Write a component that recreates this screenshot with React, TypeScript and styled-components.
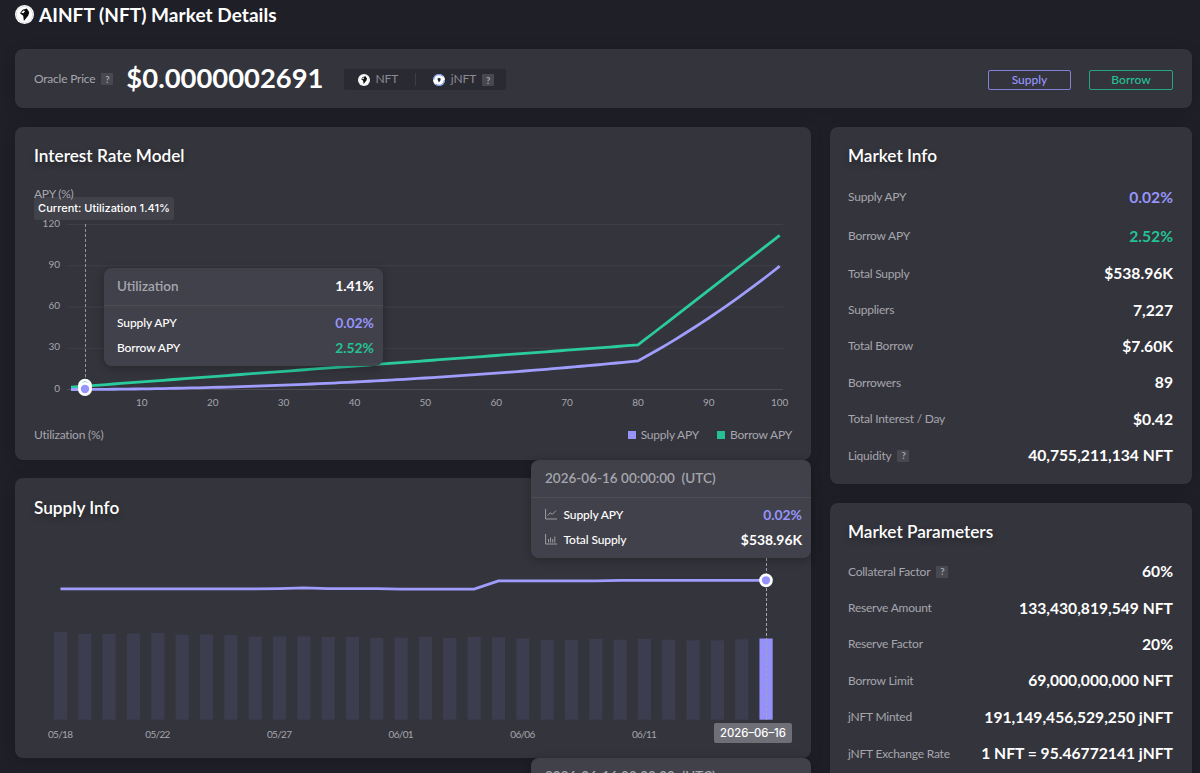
import React from 'react';
import styled, { createGlobalStyle } from 'styled-components';

const violet = '#9694fb';
const green = '#24c195';

const GlobalStyle = createGlobalStyle`
  * { box-sizing: border-box; }
  html, body { margin: 0; background: #1f1f28; overflow: hidden; }
  body { font-family: Lato, "Noto Sans", sans-serif; color: #fff; }
`;

const Page = styled.main`
  height: 773px;
  overflow: hidden;
  padding: 0 8px 0 15px;
`;

const PageTitle = styled.h1`
  display: flex;
  align-items: center;
  gap: 5px;
  height: 49px;
  padding-bottom: 20px;
  margin: 0;
  font-size: 19px;
  font-weight: 700;
  letter-spacing: 0.05px;
  white-space: nowrap;
`;

const Card = styled.section<{ $height?: number; $top?: number; $left?: number }>`
  position: relative;
  height: ${(p) => (p.$height ? `${p.$height}px` : 'auto')};
  padding: ${(p) => p.$top ?? 9}px 19px 0 ${(p) => p.$left ?? 19}px;
  border-radius: 8px;
  background: #34343c;
  box-shadow: 0 2px 14px rgba(0, 0, 0, 0.15);
`;

const PriceBar = styled(Card)`
  display: flex;
  align-items: center;
  height: 59px;
  padding: 0 19px;
  margin-bottom: 19px;
`;

const Columns = styled.div`
  display: grid;
  grid-template-columns: 796px 362px;
  gap: 19px;
  align-items: start;
`;

const Column = styled.div<{ $gap: number }>`
  display: flex;
  flex-direction: column;
  gap: ${(p) => p.$gap}px;
`;

const Label = styled.span`
  display: inline-flex;
  align-items: center;
  font-size: 12px;
  letter-spacing: -0.22px;
  color: #a6a6ad;
  white-space: nowrap;
`;

const Hint = styled.i`
  display: inline-flex;
  align-items: center;
  justify-content: center;
  width: 12px;
  height: 12px;
  margin: 1px 0 0 6px;
  border-radius: 1px;
  background: #484850;
  color: #a6a6ad;
  font: 700 9.5px Lato, sans-serif;
`;

const Price = styled.strong`
  width: 196px;
  margin: -2px 0 0 13px;
  font-size: 27.4px;
  font-weight: 700;
  line-height: 36px;
  white-space: nowrap;
`;

const Tokens = styled.div`
  display: flex;
  align-items: center;
  width: 162px;
  height: 21px;
  margin: 2px 0 0 21.6px;
  padding-left: 14px;
  border-radius: 2px;
  background: #2a2a32;
  font-size: 12px;
  color: #8a8a92;
`;

const Token = styled.span`
  display: flex;
  align-items: center;
  gap: 5.5px;
  letter-spacing: -0.1px;
`;

const TokenName = styled.span`
  margin-top: -2px;
`;

const TokenRule = styled.span`
  width: 1px;
  height: 13px;
  margin: 0 17px;
  background: #3d3d46;
`;

const Actions = styled.div`
  display: flex;
  gap: 18px;
  margin: 2px 0 0 auto;
`;

const ActionButton = styled.button<{ $tone: string; $width: number }>`
  width: ${(p) => p.$width}px;
  height: 20px;
  padding: 0;
  border: 1px solid ${(p) => p.$tone}cc;
  border-radius: 2px;
  background: transparent;
  color: ${(p) => p.$tone};
  font: 500 12px/18px Lato, sans-serif;
`;

const CardTitle = styled.h2`
  height: 40px;
  margin: 0;
  font-size: 17.2px;
  font-weight: 600;
  line-height: 40px;
  text-shadow: 0 3px 6px rgba(0, 0, 0, 0.3);
`;

const Row = styled.div<{ $tall?: boolean }>`
  display: flex;
  align-items: center;
  justify-content: space-between;
  height: ${(p) => (p.$tall ? 39 : 36.4)}px;
`;

const RowList = styled.div`
  padding-top: 1px;
`;

const Value = styled.span<{ $tone?: string }>`
  font-size: 15.65px;
  font-weight: 700;
  color: ${(p) => p.$tone || '#fff'};
  white-space: nowrap;
`;

const AxisName = styled.div`
  position: relative;
  z-index: 1;
  height: 16px;
  margin-top: 10px;
  font-size: 12px;
  line-height: 16px;
  letter-spacing: -0.25px;
  color: #a6a6ad;
`;

const Plot = styled.svg`
  display: block;
  overflow: visible;
  font-family: Lato, sans-serif;
`;

const ChartFooter = styled.div`
  display: flex;
  align-items: center;
  height: 20px;
  margin-top: 12px;
`;

const Legend = styled.div`
  display: flex;
  gap: 18px;
  margin-left: auto;
`;

const Swatch = styled.i<{ $tone: string }>`
  width: 8px;
  height: 8px;
  margin: 2px 5px 0 0;
  background: ${(p) => p.$tone};
`;

const CurrentTag = styled.div`
  position: absolute;
  left: 19px;
  top: 70px;
  width: 140px;
  height: 23px;
  border-radius: 3px;
  background: #42424b;
  font: 500 11px/23px Inter, sans-serif;
  text-align: center;
  white-space: nowrap;
`;

const Tooltip = styled.div<{ $left: number; $top: number; $width: number }>`
  position: absolute;
  z-index: 2;
  left: ${(p) => p.$left}px;
  top: ${(p) => p.$top}px;
  width: ${(p) => p.$width}px;
  height: 98px;
  border-radius: 8px;
  background: rgba(66, 66, 75, 0.97);
  box-shadow: 0 2px 10px rgba(0, 0, 0, 0.28);
`;

const TooltipHead = styled.div<{ $inset: number }>`
  display: flex;
  align-items: center;
  justify-content: space-between;
  height: 38px;
  padding: 0 9px 2px ${(p) => p.$inset}px;
  border-bottom: 1px solid #4c4c55;
  font-size: 13.5px;
  font-weight: 600;
  color: #a6a6ad;
`;

const TooltipBody = styled.div<{ $inset: number }>`
  padding: 4px 9px 0 ${(p) => p.$inset}px;
`;

const TooltipRow = styled.div`
  display: flex;
  align-items: center;
  height: 25px;
  font-size: 12px;
  font-weight: 500;
  letter-spacing: -0.12px;
  svg { margin-right: 6.5px; }
`;

const TooltipValue = styled.span<{ $tone?: string }>`
  margin: -1px 0 0 auto;
  font-size: 13.9px;
  font-weight: 700;
  letter-spacing: 0;
  color: ${(p) => p.$tone || '#fff'};
`;

const DateTag = styled.div`
  position: absolute;
  left: 699px;
  top: 245px;
  width: 78px;
  height: 20px;
  border-radius: 2px;
  background: #6f6f78;
  font: 500 11.3px/20px Inter, sans-serif;
  text-align: center;
`;

function Coin({ size, jToken }: { size: number; jToken?: boolean }) {
  return (
    <svg width={size} height={size} viewBox="0 0 20 20">
      <circle cx="10" cy="10" r="10" fill="#fff" />
      {jToken ? (
        <>
          <circle cx="10" cy="10" r="9" fill="none" stroke="#6f90e6" strokeWidth="2" strokeDasharray="20 8.3" />
          <path d="M7.2 7.8 10 6.3 13 7.8 12.2 10.8 9.8 14Z" fill="#20252f" />
        </>
      ) : (
        <>
          <circle cx="10" cy="10" r="8.6" fill="none" stroke="#b9b9bd" strokeWidth=".5" />
          <path d="M5.3 8.6 8 5 12.5 3.8 15 7.5 14 11 9.4 16.8 8.6 11.4Z" fill="#0d0d10" />
          <path d="M6.6 8.2 8.8 5.9 10.6 6.4 8.8 8.8Z" fill="#fff" />
        </>
      )}
    </svg>
  );
}

const ux = (u: number) => 37 + u * 7.087;
const ay = (v: number) => 187.5 - v * 1.375;
const borrowAt = (u: number) => (u <= 80 ? 1.7 + u * 0.384 : 32.4 + (u - 80) * 3.985);
const supplyAt = (u: number) => borrowAt(u) * (u / 100) * 0.8;
const steps = Array.from({ length: 101 }, (_, i) => i);
const curve = (f: (u: number) => number) => steps.map((u) => `${ux(u)},${ay(f(u))}`).join(' ');

function RatePlot() {
  return (
    <Plot width={758} height={210}>
      {[0, 30, 60, 90, 120].map((v) => (
        <g key={v}>
          <line x1={33} x2={749} y1={ay(v)} y2={ay(v)} stroke={v ? '#3f3f48' : '#4c4c54'} />
          <text x={26} y={ay(v) + 2} fontSize={10} fill="#a6a6ad" textAnchor="end">{v}</text>
        </g>
      ))}
      {[10, 20, 30, 40, 50, 60, 70, 80, 90, 100].map((u) => (
        <text key={u} x={ux(u)} y={203.5} fontSize={10} fill="#a6a6ad" textAnchor="middle">{u}</text>
      ))}
      <line x1={51.5} x2={51.5} y1={22} y2={178} stroke="#94949b" strokeDasharray="3 2" />
      <polyline points={curve(borrowAt)} fill="none" stroke="#2bcba0" strokeWidth={2.8} />
      <polyline points={curve(supplyAt)} fill="none" stroke="#a09dfc" strokeWidth={2.8} />
      <circle cx={51} cy={183.7} r={5.6} fill={green} stroke="#fff" strokeWidth={2.8} />
      <circle cx={51} cy={187} r={5.6} fill={violet} stroke="#fff" strokeWidth={2.8} />
    </Plot>
  );
}

const barTops = [
  632, 634, 634, 633.5, 633, 634.7, 634.3, 635, 636.5, 636.3, 636.3, 637, 637, 638, 637.5,
  636.7, 638, 637, 637.3, 638.3, 640, 640, 639, 639.7, 639, 639.7, 640.3, 640.3, 639.3, 638.5,
].map((t) => t - 528);
const apy = barTops.map((_, i) => (i === 10 ? 59.9 : i < 9 ? 60.9 : i < 14 ? 60.6 : i < 18 ? 61.2 : i < 23 ? 52.9 : 52.4));
const dx = (i: number) => 26.5 + i * 24.33;
const dayTicks: [number, string][] = [[0, '05/18'], [4, '05/22'], [9, '05/27'], [14, '06/01'], [19, '06/06'], [24, '06/11']];

function SupplyPlot() {
  return (
    <Plot width={758} height={220}>
      {barTops.map((t, i) => (
        <rect key={i} x={dx(i) - 6.6} y={t} width={13.2} height={191.7 - t} fill={i === 29 ? '#9491fb' : '#3c3d4f'} />
      ))}
      {dayTicks.map(([i, d]) => (
        <text key={d} x={dx(i)} y={209.5} fontSize={10} fill="#a6a6ad" textAnchor="middle" textLength={25}>{d}</text>
      ))}
      <line x1={732.5} x2={732.5} y1={30} y2={192} stroke="#a4a4b4" strokeDasharray="3 2" />
      <polyline points={apy.map((y, i) => `${dx(i)},${y}`).join(' ')} fill="none" stroke="#9f9cfc" strokeWidth={2.8} />
      <circle cx={732} cy={52.3} r={5.5} fill={violet} stroke="#fff" strokeWidth={2.7} />
    </Plot>
  );
}

function ChartIcon({ bars }: { bars?: boolean }) {
  return (
    <svg width="12" height="11" viewBox="0 0 12 11" fill="none" stroke="#a6a6ad" strokeWidth=".9">
      <path d="M.6 0V10H12" />
      {bars ? <path d="M3.5 8.5V5M5.6 8.5V3.5M7.7 8.5V5M9.8 8.5V2.5" /> : <path d="M2.8 6.5 5.2 3.8 7.3 5.3 11 1.6" />}
    </svg>
  );
}

function SupplyTooltip({ top }: { top: number }) {
  return (
    <Tooltip $left={516} $top={top} $width={280}>
      <TooltipHead $inset={14}><span>2026-06-16 00:00:00&nbsp; (UTC)</span></TooltipHead>
      <TooltipBody $inset={14}>
        <TooltipRow><ChartIcon />Supply APY<TooltipValue $tone={violet}>0.02%</TooltipValue></TooltipRow>
        <TooltipRow><ChartIcon bars />Total Supply<TooltipValue>$538.96K</TooltipValue></TooltipRow>
      </TooltipBody>
    </Tooltip>
  );
}

type Item = { label: string; value: string; tone?: string; hint?: boolean };

const marketInfo: Item[] = [
  { label: 'Supply APY', value: '0.02%', tone: violet },
  { label: 'Borrow APY', value: '2.52%', tone: green },
  { label: 'Total Supply', value: '$538.96K' },
  { label: 'Suppliers', value: '7,227' },
  { label: 'Total Borrow', value: '$7.60K' },
  { label: 'Borrowers', value: '89' },
  { label: 'Total Interest / Day', value: '$0.42' },
  { label: 'Liquidity', value: '40,755,211,134 NFT', hint: true },
];

const marketParameters: Item[] = [
  { label: 'Collateral Factor', value: '60%', hint: true },
  { label: 'Reserve Amount', value: '133,430,819,549 NFT' },
  { label: 'Reserve Factor', value: '20%' },
  { label: 'Borrow Limit', value: '69,000,000,000 NFT' },
  { label: 'jNFT Minted', value: '191,149,456,529,250 jNFT' },
  { label: 'jNFT Exchange Rate', value: '1 NFT = 95.46772141 jNFT' },
];

function Facts({ title, items, height }: { title: string; items: Item[]; height: number }) {
  return (
    <Card $height={height} $left={18}>
      <CardTitle>{title}</CardTitle>
      <RowList>
        {items.map((it) => (
          <Row key={it.label} $tall={!!it.tone}>
            <Label>{it.label}{it.hint && <Hint>?</Hint>}</Label>
            <Value $tone={it.tone}>{it.value}</Value>
          </Row>
        ))}
      </RowList>
    </Card>
  );
}

export default function App() {
  return (
    <>
      <GlobalStyle />
      <Page>
        <PageTitle><Coin size={19} />AINFT (NFT) Market Details</PageTitle>
        <PriceBar>
          <Label>Oracle Price<Hint>?</Hint></Label>
          <Price>$0.0000002691</Price>
          <Tokens>
            <Token><Coin size={12} /><TokenName>NFT</TokenName></Token>
            <TokenRule />
            <Token><Coin size={12} jToken /><TokenName>jNFT</TokenName></Token>
            <Hint>?</Hint>
          </Tokens>
          <Actions>
            <ActionButton $tone={violet} $width={83}>Supply</ActionButton>
            <ActionButton $tone={green} $width={84}>Borrow</ActionButton>
          </Actions>
        </PriceBar>
        <Columns>
          <Column $gap={18}>
            <Card $height={333}>
              <CardTitle>Interest Rate Model</CardTitle>
              <AxisName>APY (%)</AxisName>
              <RatePlot />
              <ChartFooter>
                <Label>Utilization (%)</Label>
                <Legend>
                  <Label><Swatch $tone={violet} />Supply APY</Label>
                  <Label><Swatch $tone={green} />Borrow APY</Label>
                </Legend>
              </ChartFooter>
              <CurrentTag>Current: Utilization 1.41%</CurrentTag>
              <Tooltip $left={89} $top={141} $width={279}>
                <TooltipHead $inset={13}>Utilization<TooltipValue>1.41%</TooltipValue></TooltipHead>
                <TooltipBody $inset={13}>
                  <TooltipRow>Supply APY<TooltipValue $tone={violet}>0.02%</TooltipValue></TooltipRow>
                  <TooltipRow>Borrow APY<TooltipValue $tone={green}>2.52%</TooltipValue></TooltipRow>
                </TooltipBody>
              </Tooltip>
            </Card>
            <Card $height={280} $top={10}>
              <CardTitle>Supply Info</CardTitle>
              <SupplyPlot />
              <DateTag>2026–06–16</DateTag>
              <SupplyTooltip top={-18} />
              <SupplyTooltip top={280} />
            </Card>
          </Column>
          <Column $gap={19}>
            <Facts title="Market Info" items={marketInfo} height={357} />
            <Facts title="Market Parameters" items={marketParameters} height={300} />
          </Column>
        </Columns>
      </Page>
    </>
  );
}
